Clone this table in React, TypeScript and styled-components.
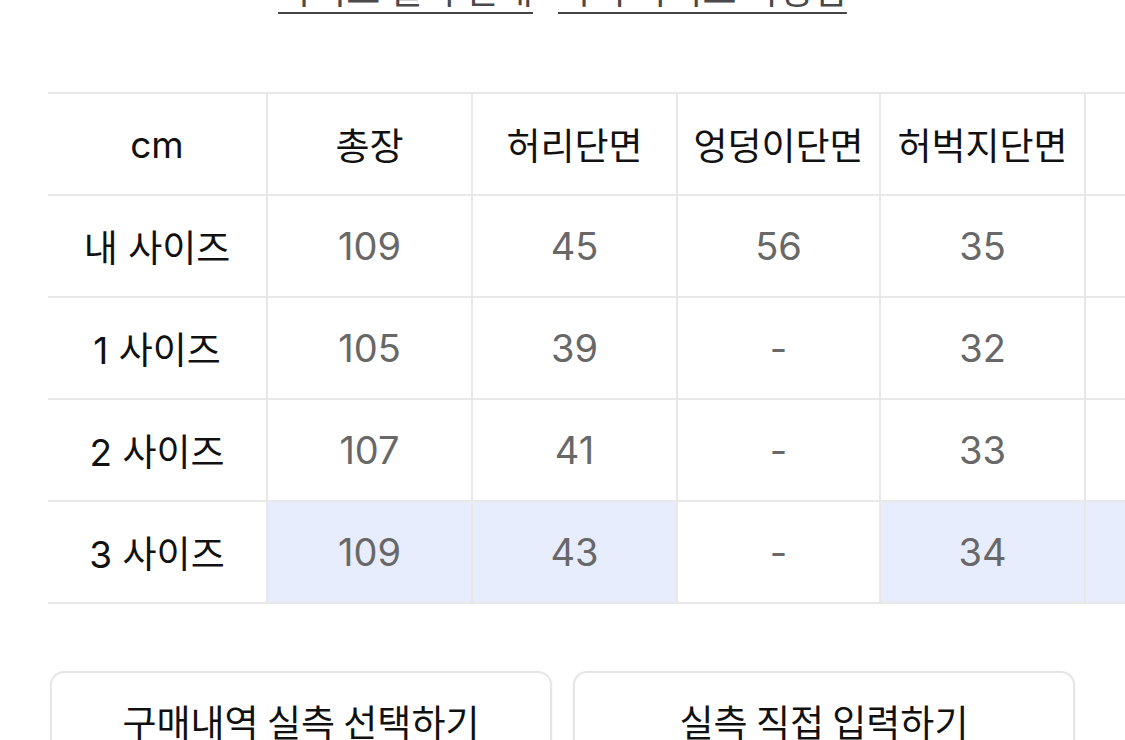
import React from "react";
import styled, { createGlobalStyle } from "styled-components";

const GlobalStyle = createGlobalStyle`
  html, body {
    margin: 0;
    padding: 0;
    background: #ffffff;
    overflow: hidden;
  }
  body {
    font-family: "Inter", "Noto Sans CJK KR", sans-serif;
    color: #111111;
    -webkit-font-smoothing: antialiased;
  }
`;

const Page = styled.div`
  width: 1125px;
  height: 740px;
  overflow: hidden;
`;

const LinkRow = styled.div`
  display: flex;
  justify-content: center;
  gap: 25px;
  margin-top: -34px;
  height: 44px;
`;

const GuideLink = styled.a`
  font-family: "Noto Sans CJK KR", sans-serif;
  font-size: 37px;
  line-height: 44px;
  color: #4a4a4a;
  text-decoration: underline;
  text-decoration-thickness: 2px;
  text-underline-offset: 8px;
  text-decoration-color: #444444;
`;

const TableScroll = styled.div`
  margin-top: 82px;
  padding-left: 48px;
  overflow: hidden;
`;

const Grid = styled.div`
  display: grid;
  grid-template-columns: 218px 205px 205px 203px 205px 205px;
  width: max-content;
  border-bottom: 2px solid #e8e8e8;
`;

const Cell = styled.div<{ $text?: boolean; $hl?: boolean; $first?: boolean }>`
  height: 100px;
  display: flex;
  align-items: center;
  justify-content: center;
  border-top: 2px solid #e8e8e8;
  border-left: ${(p) => (p.$first ? "none" : "2px solid #e8e8e8")};
  background: ${(p) => (p.$hl ? "#e8edfd" : "#ffffff")};
  font-size: ${(p) => (p.$text ? "37px" : "38px")};
  font-weight: 400;
  color: ${(p) => (p.$text ? "#111111" : "#686868")};
  white-space: nowrap;
`;

const ButtonRow = styled.div`
  display: flex;
  gap: 21px;
  padding: 0 50px;
  margin-top: 67px;
`;

const ActionButton = styled.button`
  flex: 1;
  height: 100px;
  border: 2px solid #e6e6e6;
  border-radius: 14px;
  background: #ffffff;
  box-shadow: 0 1px 3px rgba(0, 0, 0, 0.05);
  font-family: "Noto Sans CJK KR", sans-serif;
  font-size: 37px;
  font-weight: 400;
  color: #111111;
  padding: 0;
  cursor: pointer;
`;

const headers = ["cm", "총장", "허리단면", "엉덩이단면", "허벅지단면", "밑위"];

type Row = { label: string; values: string[]; hl?: boolean[] };

const rows: Row[] = [
  { label: "내 사이즈", values: ["109", "45", "56", "35", "30"] },
  { label: "1 사이즈", values: ["105", "39", "-", "32", "28"] },
  { label: "2 사이즈", values: ["107", "41", "-", "33", "29"] },
  {
    label: "3 사이즈",
    values: ["109", "43", "-", "34", "30"],
    hl: [true, true, false, true, true],
  },
];

export default function App() {
  return (
    <>
      <GlobalStyle />
      <Page>
        <LinkRow>
          <GuideLink>사이즈 실측 안내</GuideLink>
          <GuideLink>나의 사이즈 측정법</GuideLink>
        </LinkRow>
        <TableScroll>
          <Grid>
            {headers.map((h, i) => (
              <Cell key={h} $text $first={i === 0}>
                {h}
              </Cell>
            ))}
            {rows.map((r) => (
              <React.Fragment key={r.label}>
                <Cell $text $first>
                  {r.label}
                </Cell>
                {r.values.map((v, i) => (
                  <Cell key={i} $hl={r.hl ? r.hl[i] : false}>
                    {v}
                  </Cell>
                ))}
              </React.Fragment>
            ))}
          </Grid>
        </TableScroll>
        <ButtonRow>
          <ActionButton>구매내역 실측 선택하기</ActionButton>
          <ActionButton>실측 직접 입력하기</ActionButton>
        </ButtonRow>
      </Page>
    </>
  );
}
